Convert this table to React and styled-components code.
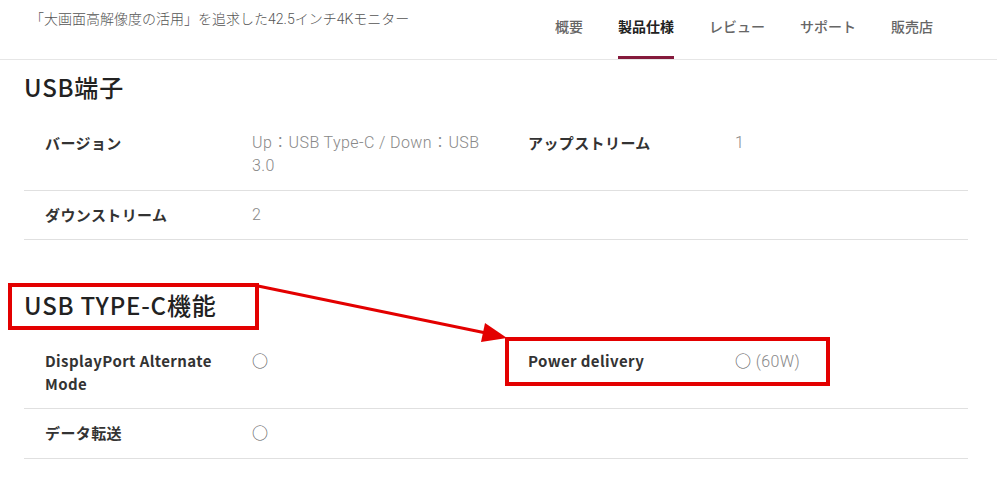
import React from "react"
import styled, { createGlobalStyle } from "styled-components"

const GlobalStyle = createGlobalStyle`
  body {
    margin: 0;
    background: #fff;
    font-family: "Noto Sans CJK JP", "Noto Sans", sans-serif;
  }
`

const Page = styled.div`
  position: relative;
  width: 997px;
  min-height: 503px;
  overflow: hidden;
`

const Header = styled.header`
  display: flex;
  justify-content: space-between;
  align-items: flex-start;
  height: 59px;
  border-bottom: 1px solid #e6e6e6;
`

const Catch = styled.div`
  padding: 9px 0 0 30px;
  font-family: Roboto, "Noto Sans CJK JP", sans-serif;
  font-weight: 300;
  font-size: 14px;
  line-height: 20px;
  color: #555;
`

const Tabs = styled.nav`
  display: flex;
  gap: 35px;
  margin-right: 64px;
  height: 59px;
`

const Tab = styled.a`
  display: block;
  box-sizing: border-box;
  height: 59px;
  padding-top: 16px;
  font-size: 14px;
  line-height: 20px;
  font-weight: ${({ active }) => (active ? 700 : 500)};
  color: ${({ active }) => (active ? "#222" : "#666")};
  border-bottom: 3px solid ${({ active }) => (active ? "#851a3c" : "transparent")};
  text-decoration: none;
  cursor: pointer;
`

const Content = styled.main`
  padding: 0 29px 0 24px;
`

const Section = styled.section`
  margin-top: ${({ first }) => (first ? "11px" : "49px")};
`

const Title = styled.h2`
  margin: 0 0 16px;
  font-size: 24px;
  line-height: 32px;
  font-weight: 500;
  letter-spacing: 0.8px;
  color: #222;
`

const Row = styled.div`
  display: grid;
  grid-template-columns: 207px 276px 207px 1fr;
  padding: 12px 0 13px 21px;
  border-bottom: 1px solid #e0e0e0;
  line-height: 23px;
`

const Label = styled.div`
  padding-right: 20px;
  font-size: 15px;
  font-weight: 700;
  letter-spacing: 0.4px;
  color: #333;
`

const Value = styled.div`
  padding-right: 36px;
  font-family: Roboto, "Noto Sans CJK JP", sans-serif;
  font-weight: 300;
  font-size: 16px;
  letter-spacing: 0.4px;
  color: #888;
`

const Mark = styled.span`
  font-family: "Noto Sans CJK JP", sans-serif;
  font-weight: 400;
  color: #555;
`

const Overlay = styled.svg`
  position: absolute;
  left: 0;
  top: 0;
  pointer-events: none;
`

const sections = [
  {
    title: "USB端子",
    rows: [
      [
        ["バージョン", "Up：USB Type-C / Down：USB 3.0"],
        ["アップストリーム", "1"],
      ],
      [["ダウンストリーム", "2"]],
    ],
  },
  {
    title: "USB TYPE-C機能",
    rows: [
      [
        ["DisplayPort Alternate Mode", "○"],
        ["Power delivery", "○ (60W)"],
      ],
      [["データ転送", "○"]],
    ],
  },
]

const tabs = ["概要", "製品仕様", "レビュー", "サポート", "販売店"]

const renderValue = (v) =>
  v.startsWith("○") ? (
    <>
      <Mark>○</Mark>
      {v.slice(1)}
    </>
  ) : (
    v
  )

const App = () => {
  return (
    <Page>
      <GlobalStyle />
      <Header>
        <Catch>「大画面高解像度の活用」を追求した42.5インチ4Kモニター</Catch>
        <Tabs>
          {tabs.map((t) => (
            <Tab key={t} active={t === "製品仕様" ? 1 : 0}>
              {t}
            </Tab>
          ))}
        </Tabs>
      </Header>
      <Content>
        {sections.map((s, i) => (
          <Section key={s.title} first={i === 0 ? 1 : 0}>
            <Title>{s.title}</Title>
            {s.rows.map((r, j) => (
              <Row key={j}>
                {r.map(([k, v]) => (
                  <React.Fragment key={k}>
                    <Label>{k}</Label>
                    <Value>{renderValue(v)}</Value>
                  </React.Fragment>
                ))}
              </Row>
            ))}
          </Section>
        ))}
      </Content>
      {/* red annotation marks */}
      <Overlay width="997" height="503" viewBox="0 0 997 503">
        <rect x="10" y="285" width="247" height="43" fill="none" stroke="#e30000" strokeWidth="4" />
        <rect x="507" y="339" width="321" height="45" fill="none" stroke="#e30000" strokeWidth="4" />
        <line x1="258" y1="286" x2="486" y2="333" stroke="#e30000" strokeWidth="3" />
        <polygon points="507,338 481,342 485,323" fill="#e30000" />
      </Overlay>
    </Page>
  )
}

export default App
